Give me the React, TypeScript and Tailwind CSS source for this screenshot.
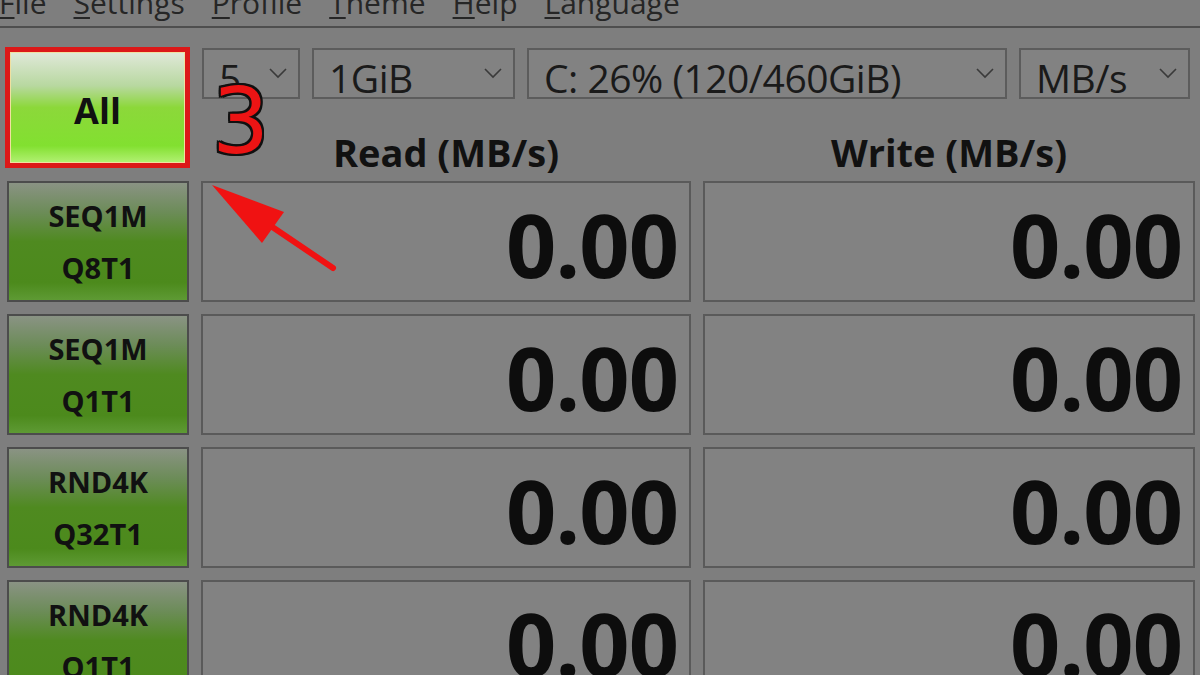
import React from "react";

const menu = ["File", "Settings", "Profile", "Theme", "Help", "Language"];
const drops = [
  { label: "5", w: "w-[98px]" },
  { label: "1GiB", w: "w-[203px]" },
  { label: "C: 26% (120/460GiB)", w: "w-[480px]" },
  { label: "MB/s", w: "w-[171px]" },
];
const tests = [
  ["SEQ1M", "Q8T1"],
  ["SEQ1M", "Q1T1"],
  ["RND4K", "Q32T1"],
  ["RND4K", "Q1T1"],
];

function Chevron() {
  return (
    <svg width="18" height="11" viewBox="0 0 18 11" className="shrink-0">
      <polyline points="1,1 9,9 17,1" fill="none" stroke="#3a3a3a" strokeWidth="1.6" />
    </svg>
  );
}

function Value() {
  return (
    <div className="flex-1 flex items-center justify-end pr-[11px] pt-[4px] border-2 border-[#5a5a5a] bg-[#828282]">
      <span className="text-[88px] font-bold leading-none text-[#0d0d0d] tracking-[-1px]">0.00</span>
    </div>
  );
}

export default function App() {
  return (
    <div className="relative w-[1200px] h-[675px] overflow-hidden bg-[#7e7e7e] font-['Open_Sans',sans-serif]">
      {/* Menu bar */}
      <div className="h-[28px] overflow-hidden border-b-2 border-[#4e4e4e]">
        <div className="flex gap-[27px] -ml-[1px] -mt-[12px] text-[30px] leading-[30px] text-[#262626]">
          {menu.map((m) => (
            <span key={m}>
              <span className="underline decoration-2 underline-offset-[3px]">{m[0]}</span>
              {m.slice(1)}
            </span>
          ))}
        </div>
      </div>

      {/* Top section */}
      <div className="flex gap-[12px] pl-[5px] mt-[19px] h-[121px]">
        <div className="w-[185px] h-[121px] border-[5px] border-[#dc1818] shrink-0">
          <div className="h-full flex items-center justify-center pt-[6px] border border-[#f0e0a0] bg-[linear-gradient(to_bottom,#dfe8d8_0%,#b8d8a0_30%,#8cd83a_50%,#82e030_85%,#b0f070_100%)]">
            <span className="text-[36px] font-bold text-[#111] leading-none">All</span>
          </div>
        </div>
        <div className="flex flex-col">
          <div className="flex gap-[12px] h-[59px] mt-[1px]">
            {drops.map((d) => (
              <div
                key={d.label}
                className={`${d.w} flex items-center justify-between pl-[15px] pr-[11px] border-2 border-[#5c5c5c] bg-[#828282]`}
              >
                <span className="text-[39px] leading-none pt-[8px] tracking-[-0.5px] text-[#1a1a1a] whitespace-nowrap">
                  {d.label}
                </span>
                <Chevron />
              </div>
            ))}
          </div>
          <div className="flex gap-[12px] pt-[33px] -ml-[1px]">
            <div className="w-[490px] text-center text-[38px] font-bold leading-[40px] text-[#111]">Read (MB/s)</div>
            <div className="w-[492px] text-center text-[38px] font-bold leading-[40px] text-[#111]">Write (MB/s)</div>
          </div>
        </div>
      </div>

      {/* Result rows */}
      <div className="flex flex-col gap-[12px] pl-[7px] mt-[13px]">
        {tests.map((t, i) => (
          <div key={i} className="flex gap-[12px] h-[121px]">
            <div className="w-[182px] shrink-0 flex flex-col items-center justify-center border-2 border-[#4c4c4c] bg-[linear-gradient(to_bottom,#8a9384_0%,#6c8c58_25%,#4f8a20_50%,#4c8a1c_85%,#5e9a34_100%)]">
              <span className="text-[29px] font-bold leading-[52px] text-[#111]">{t[0]}</span>
              <span className="text-[29px] font-bold leading-[52px] text-[#111]">{t[1]}</span>
            </div>
            <div className="w-[490px] flex">
              <Value />
            </div>
            <div className="w-[492px] flex">
              <Value />
            </div>
          </div>
        ))}
      </div>

      {/* Annotation: number */}
      <span className="absolute left-[212px] top-[77px] text-[90px] leading-none text-[#ec1414] font-['DejaVu_Sans',sans-serif] [text-shadow:2px_0_0_#111,-2px_0_0_#111,0_2px_0_#111,0_-2px_0_#111,2px_2px_0_#111,-2px_-2px_0_#111,2px_-2px_0_#111,-2px_2px_0_#111]">
        3
      </span>

      {/* Annotation: arrow */}
      <svg className="absolute left-0 top-0 pointer-events-none" width="1200" height="675">
        <line x1="333" y1="268" x2="262" y2="220" stroke="#f01212" strokeWidth="6" strokeLinecap="round" />
        <polygon points="212,185 284,212 262,243" fill="#f01212" />
      </svg>
    </div>
  );
}
